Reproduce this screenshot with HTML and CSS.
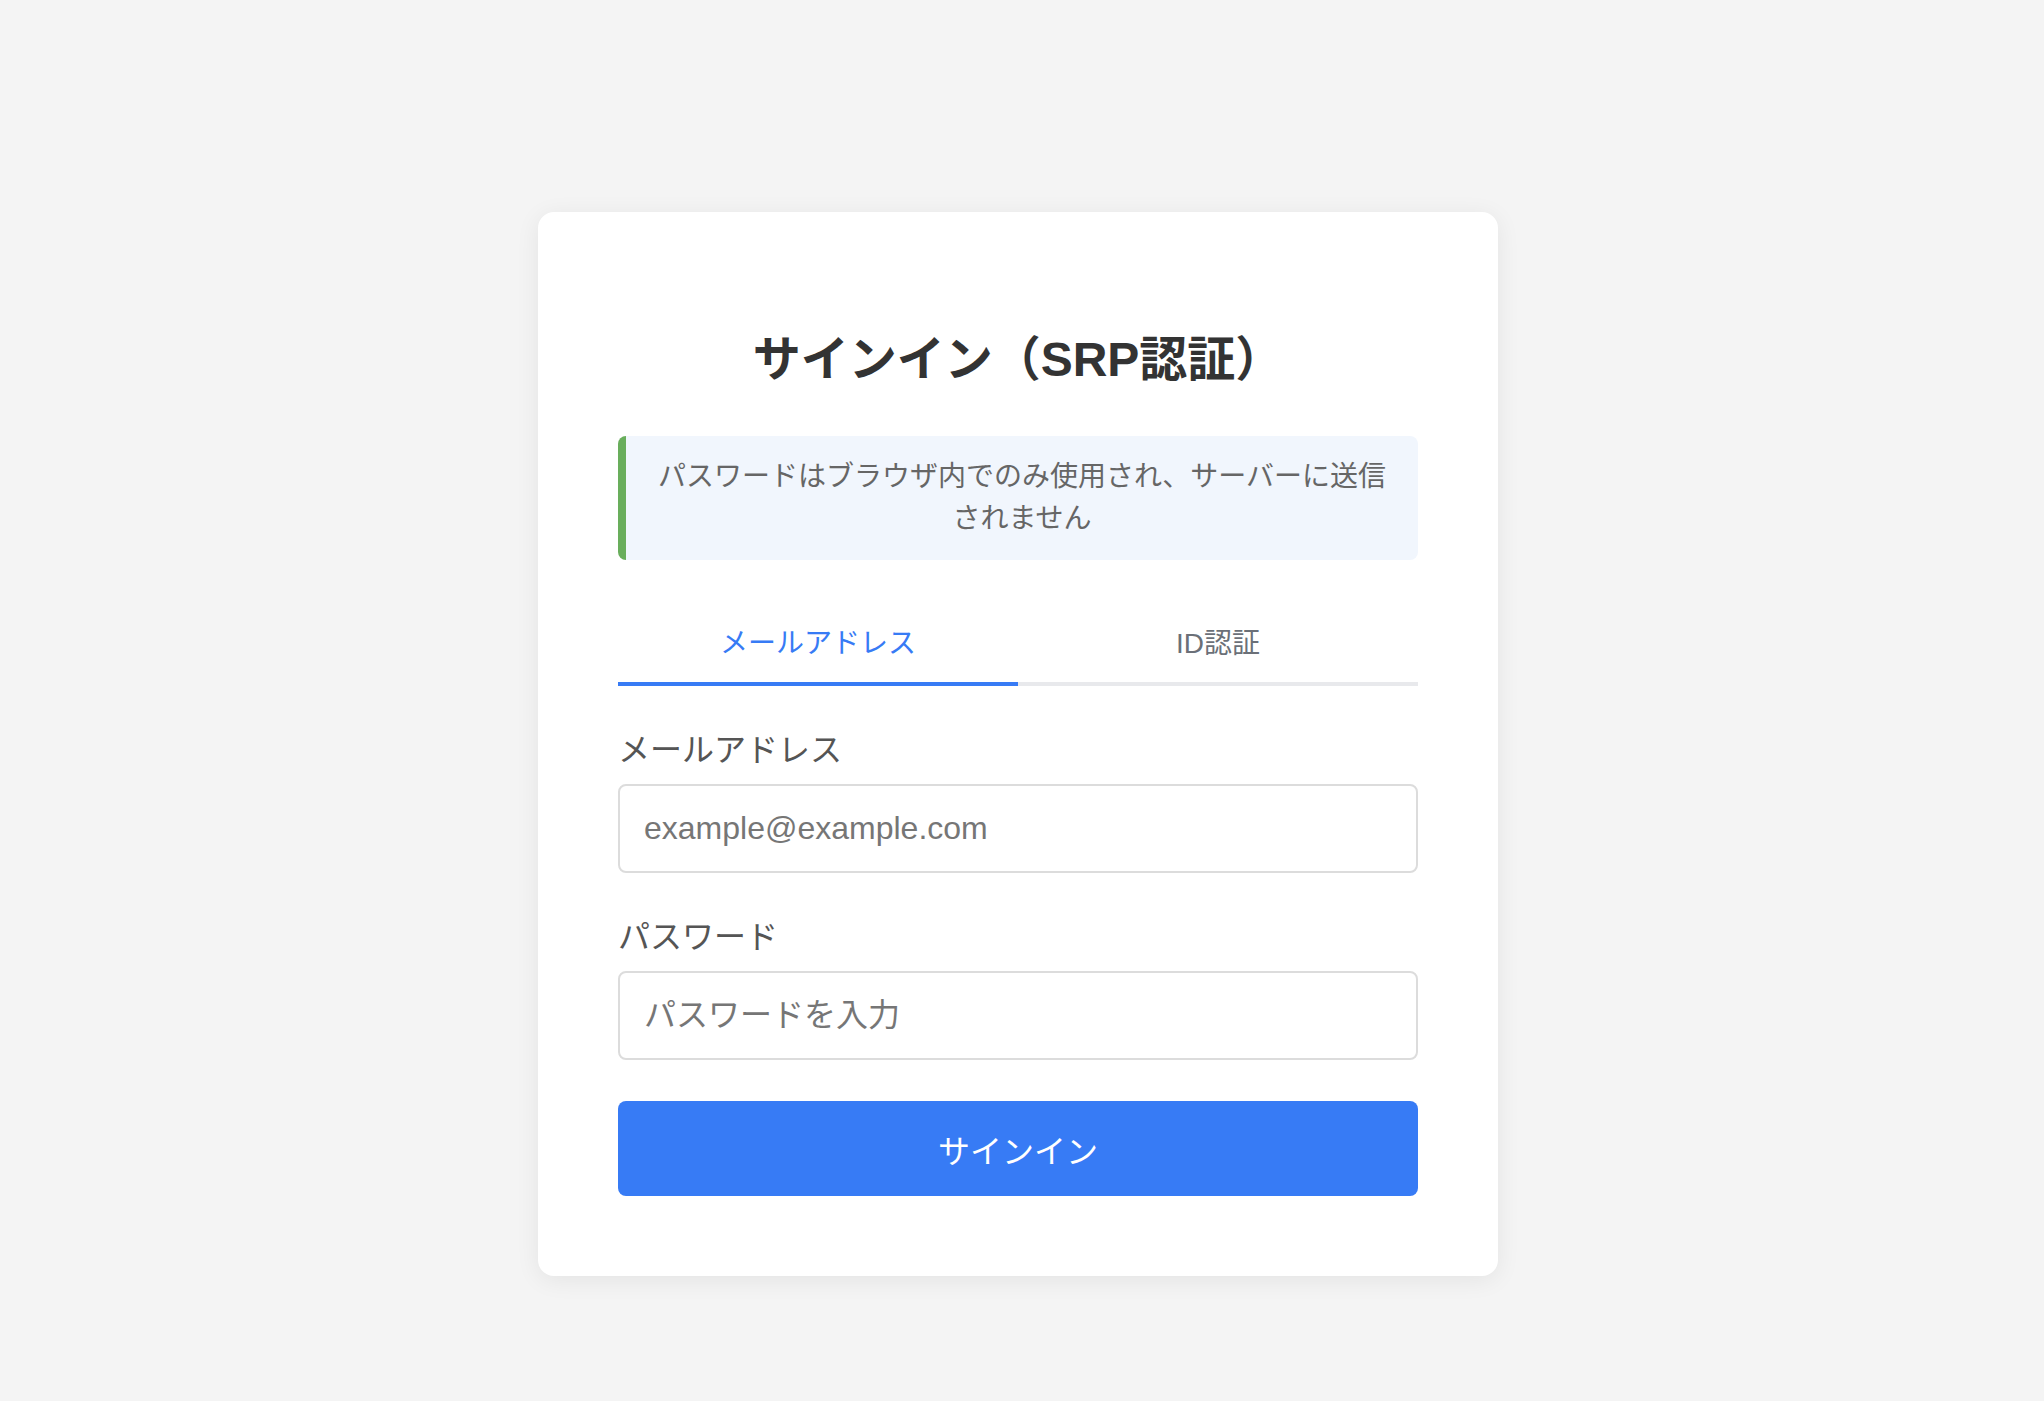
FILE: index.html
```html
<!DOCTYPE html>
<html lang="ja">
<head>
  <meta charset="UTF-8">
  <title>サインイン</title>
  <meta name="viewport" content="width=device-width, initial-scale=1.0">
  <link rel="stylesheet" href="styles.css">
</head>
<body>
  <div class="card">
    <h2 class="title">サインイン（SRP認証）</h2>

    <div class="notice">パスワードはブラウザ内でのみ使用され、サーバーに送信されません</div>

    <div class="tabs">
      <button class="tab active">メールアドレス</button>
      <button class="tab">ID認証</button>
    </div>

    <form class="signin-form" onsubmit="return false;">
      <div class="field">
        <label for="email">メールアドレス</label>
        <input id="email" type="email" placeholder="example@example.com">
      </div>
      <div class="field">
        <label for="password">パスワード</label>
        <input id="password" type="password" placeholder="パスワードを入力">
      </div>
      <button class="submit-btn" type="submit">サインイン</button>
    </form>
  </div>
</body>
</html>
```

FILE: styles.css
```css
body {
  margin: 0;
  padding: 212px 8px 0 0;
  min-height: 100vh;
  box-sizing: border-box;
  background-color: #f4f4f4;
  font-family: 'Liberation Sans', 'Noto Sans CJK JP', sans-serif;
  color: #333;
  display: flex;
  flex-direction: column;
  align-items: center;
}

.card {
  width: 960px;
  box-sizing: border-box;
  padding: 80px;
  background: #fff;
  border-radius: 16px;
  box-shadow: 0 4px 24px rgba(0, 0, 0, 0.07);
}

.title {
  margin: 39px 0 47px;
  font-size: 48px;
  line-height: 58px;
  font-weight: 700;
  text-align: center;
  color: #333;
}

/* info box with green bar on the left */
.notice {
  padding: 20px 24px;
  background: #f1f6fd;
  border-left: 8px solid #69ae5c;
  border-radius: 8px;
  font-size: 28px;
  line-height: 42px;
  color: #666;
  text-align: center;
}

.tabs {
  display: grid;
  grid-template-columns: 1fr 1fr;
  margin-top: 40px;
}

.tab {
  padding: 23px 0 17px;
  background: none;
  border: none;
  border-bottom: 4px solid #e8e9ec;
  font: inherit;
  font-size: 28px;
  line-height: 42px;
  color: #6b7078;
  cursor: pointer;
  -webkit-appearance: none;
  appearance: none;
}

.tab.active {
  color: #377bf5;
  border-bottom-color: #377bf5;
}

.field {
  margin-top: 42px;
  display: flex;
  flex-direction: column;
  gap: 12px;
}

.field label {
  font-size: 32px;
  line-height: 44px;
  color: #555;
}

.field input {
  box-sizing: border-box;
  width: 100%;
  height: 89px;
  padding: 22px 24px;
  border: 2px solid #dcdcdc;
  border-radius: 8px;
  font: inherit;
  font-size: 32px;
  line-height: 40px;
  color: #333;
  outline: none;
}

.field input::placeholder {
  color: #767676;
}

.submit-btn {
  display: block;
  width: 100%;
  height: 95px;
  margin-top: 41px;
  border: none;
  border-radius: 8px;
  background-color: #377bf5;
  color: #fff;
  font: inherit;
  font-size: 32px;
  cursor: pointer;
}
```
